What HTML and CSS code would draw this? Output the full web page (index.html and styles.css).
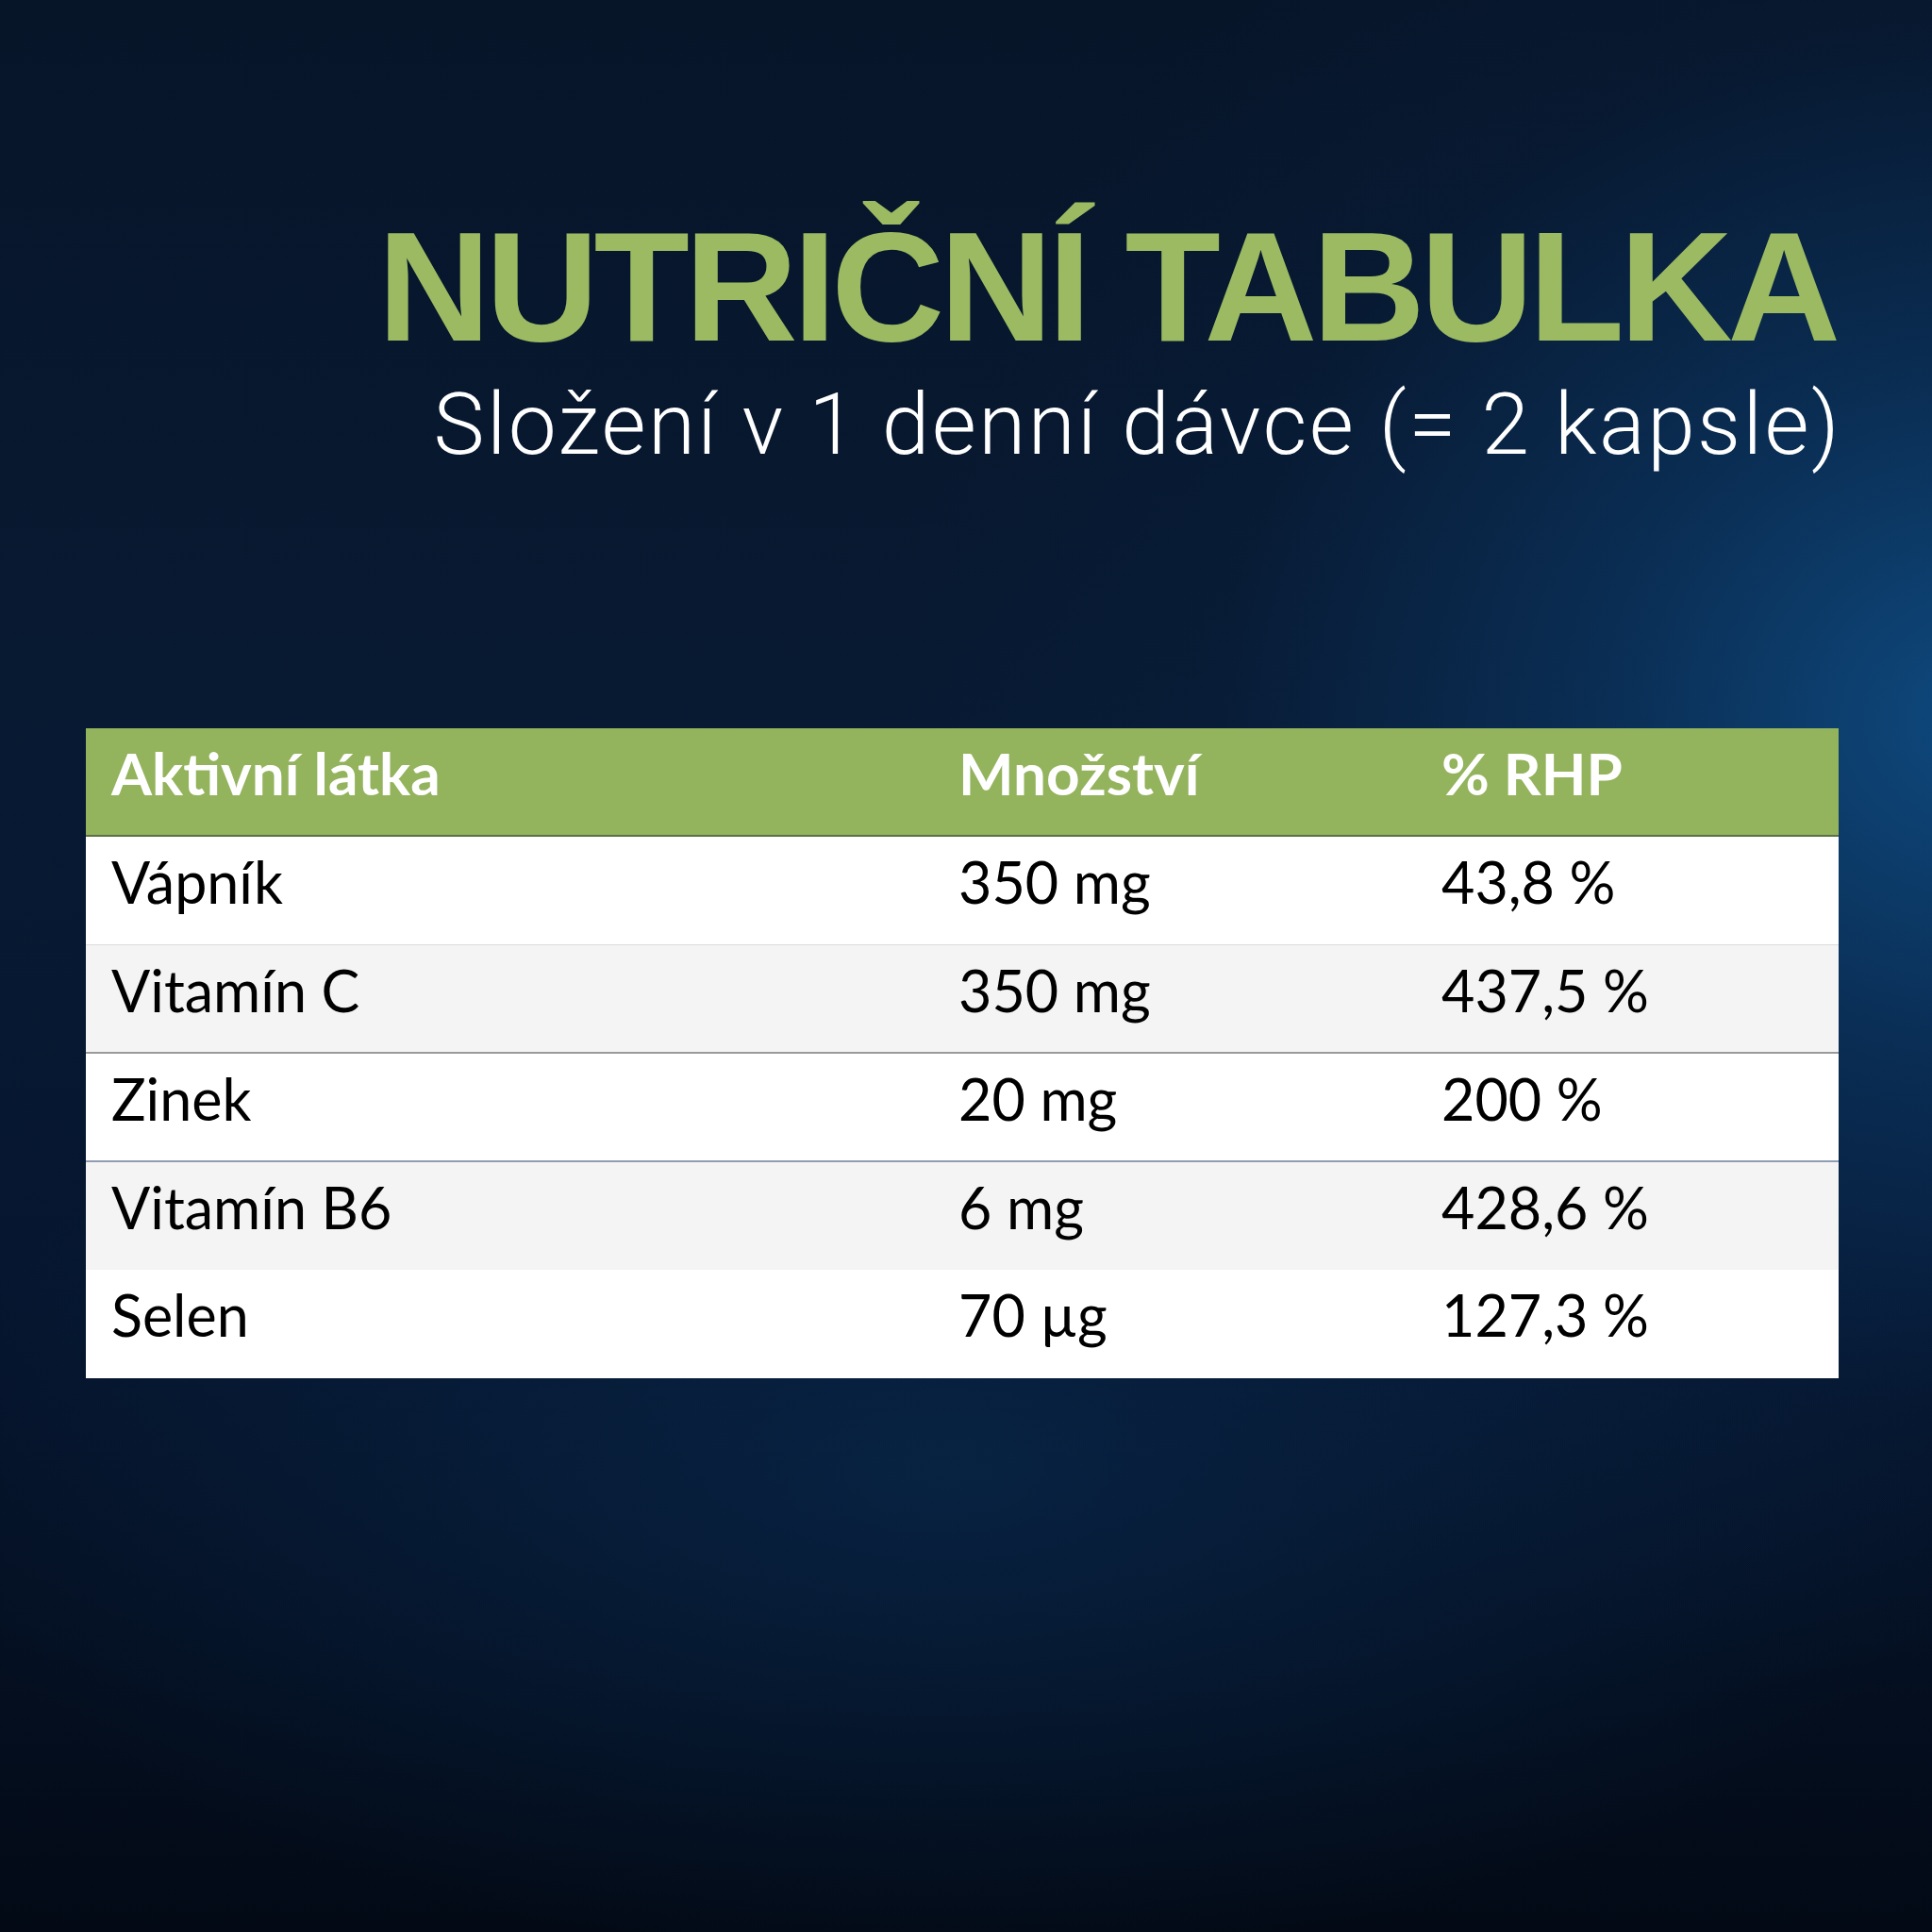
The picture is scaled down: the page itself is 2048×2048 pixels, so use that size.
FILE: index.html
```html
<!DOCTYPE html>
<html lang="cs">
<head>
<meta charset="utf-8">
<title>Nutriční tabulka</title>
<link rel="stylesheet" href="styles.css">
</head>
<body>
<main class="page">
  <header class="heading">
    <h1 class="title">NUTRIČNÍ TABULKA</h1>
    <p class="subtitle">Složení v 1 denní dávce (= 2 kapsle)</p>
  </header>
  <table class="nutri">
    <colgroup>
      <col class="c1"><col class="c2"><col class="c3">
    </colgroup>
    <thead>
      <tr><th>Aktivní látka</th><th>Množství</th><th>% RHP</th></tr>
    </thead>
    <tbody>
      <tr class="r1"><td>Vápník</td><td>350 mg</td><td>43,8 %</td></tr>
      <tr class="r2"><td>Vitamín C</td><td>350 mg</td><td>437,5 %</td></tr>
      <tr class="r3"><td>Zinek</td><td>20 mg</td><td>200 %</td></tr>
      <tr class="r4"><td>Vitamín B6</td><td>6 mg</td><td>428,6 %</td></tr>
      <tr class="r5"><td>Selen</td><td>70 µg</td><td>127,3 %</td></tr>
    </tbody>
  </table>
</main>
</body>
</html>
```

FILE: styles.css
```css
html, body {
  margin: 0;
  padding: 0;
}
body {
  width: 2048px;
  height: 2048px;
  overflow: hidden;
  background-color: #061426;
  background-image:
    radial-gradient(ellipse 1150px 1050px at 2100px 760px, rgba(15, 78, 134, 0.9) 0%, rgba(12, 62, 112, 0.55) 35%, rgba(9, 38, 74, 0.2) 70%, rgba(8, 30, 60, 0) 100%),
    radial-gradient(ellipse 1100px 520px at 1000px 1560px, rgba(10, 50, 92, 0.5) 0%, rgba(8, 30, 60, 0) 100%),
    linear-gradient(180deg, #071529 0%, #081a33 40%, #061630 65%, #030a16 100%);
}
.page {
  display: flex;
  flex-direction: column;
  padding: 221px 99px 0 91px;
}
.heading {
  display: flex;
  flex-direction: column;
  align-items: flex-end;
  padding-right: 3px;
}
.title {
  margin: 0;
  font-family: "Liberation Sans", Arial, sans-serif;
  font-weight: 700;
  font-size: 166px;
  line-height: 1;
  letter-spacing: -5.2px;
  color: #9bba62;
}
.subtitle {
  margin: 18px -6px 0 0;
  font-family: Roboto, "Liberation Sans", sans-serif;
  font-weight: 300;
  font-size: 91px;
  line-height: 1;
  letter-spacing: 2.4px;
  color: #ffffff;
}
.nutri {
  margin-top: 276px;
  width: 1858px;
  border-collapse: collapse;
  table-layout: fixed;
  font-family: Lato, "Liberation Sans", sans-serif;
  font-size: 61px;
  line-height: 1;
}
.c1 { width: 898px; }
.c2 { width: 512px; }
.c3 { width: 448px; }
.nutri th, .nutri td {
  padding: 16px 0 0 27px;
  text-align: left;
  vertical-align: top;
  box-sizing: border-box;
}
.nutri thead tr {
  height: 114px;
  background: #93b35c;
  border-bottom: 2px solid #5d7048;
}
.nutri th {
  color: #ffffff;
  font-weight: 700;
  font-size: 62px;
}
.nutri tbody tr {
  height: 115px;
  color: #000000;
}
.nutri td {
  padding-top: 17px;
  font-weight: 400;
}
.r1 { background: #ffffff; border-bottom: 1px solid #dcdcdc; }
.r2 { background: #f4f4f4; border-bottom: 2px solid #9a9a9a; }
.r3 { background: #ffffff; border-bottom: 2px solid #8f9db3; }
.r4 { background: #f4f4f4; }
.r5 { background: #ffffff; height: 116px; }
```
